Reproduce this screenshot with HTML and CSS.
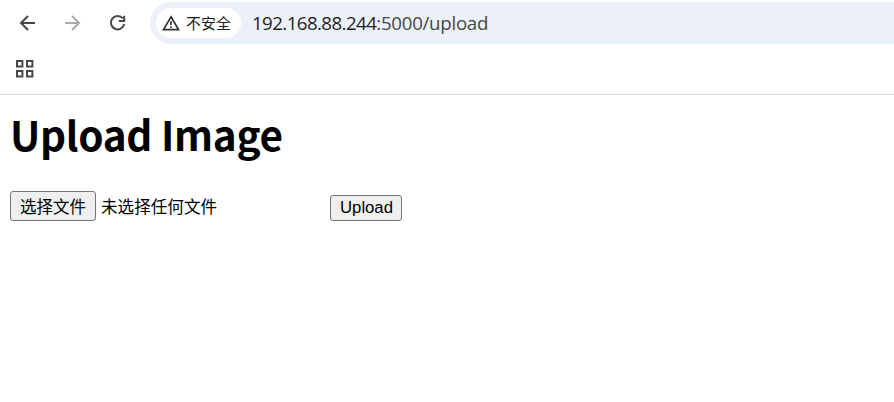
FILE: index.html
```html
<!DOCTYPE html>
<html lang="zh-CN">
<head>
<meta charset="utf-8">
<title>Upload Image</title>
<link rel="stylesheet" href="styles.css">
</head>
<body>
<header class="browser">
  <nav class="toolbar">
    <svg class="icon" viewBox="0 0 20 20"><path d="M18 10H4.5M11 3L4 10L11 17"/></svg>
    <svg class="icon icon-disabled" viewBox="0 0 20 20"><path d="M3 10H16.5M10 3L17 10L10 17"/></svg>
    <svg class="icon" viewBox="0 0 20 20"><path d="M15.8 5.4A6.7 6.7 0 1 0 17.2 11M17.2 2.8V8.1H11.9"/></svg>
    <div class="address">
      <div class="security">
        <svg class="warning" viewBox="0 0 18 16"><path d="M9 1.8L16.6 14.7H1.4Z"/><path d="M9 6.2V10M9 11.2V12.9"/></svg>
        <span class="security-text">不安全</span>
      </div>
      <div class="url"><span class="host">192.168.88.244</span>:5000/upload</div>
    </div>
  </nav>
  <div class="bookmarks">
    <svg class="apps" viewBox="0 0 20 20"><path d="M2 2H7.4V7.4H2ZM12 2H17.4V7.4H12ZM2 12H7.4V17.4H2ZM12 12H17.4V17.4H12Z"/></svg>
  </div>
</header>
<main class="page">
  <h1 class="title">Upload Image</h1>
  <form class="form">
    <button class="button choose" type="button">选择文件</button>
    <span class="status">未选择任何文件</span>
    <button class="button submit" type="button">Upload</button>
  </form>
</main>
</body>
</html>
```
FILE: styles.css
```css
* {
  box-sizing: border-box;
}

body {
  margin: 0;
  background: #fff;
  color: #000;
  font-family: "Noto Sans CJK SC", sans-serif;
}

.browser {
  height: 95px;
  border-bottom: 1px solid #dedfe0;
}

.toolbar {
  display: flex;
  align-items: center;
  height: 44px;
  padding: 2px 0 0 17px;
}

.icon {
  flex: none;
  width: 20px;
  height: 20px;
  margin-right: 25px;
  fill: none;
  stroke: #474747;
  stroke-width: 2;
}

.icon:nth-of-type(3) {
  margin-right: 23px;
}

.icon-disabled {
  stroke: #ababab;
}

.address {
  display: flex;
  flex: 1;
  align-items: center;
  height: 42px;
  padding-left: 6px;
  border-radius: 21px 0 0 21px;
  background: #ebf0f9;
}

.security {
  display: flex;
  align-items: center;
  width: 85px;
  height: 30px;
  padding-left: 6px;
  border-radius: 15px;
  background: #fff;
}

.warning {
  width: 18px;
  height: 16px;
  margin-right: 6px;
  fill: none;
  stroke: #303236;
  stroke-width: 1.7;
}

.security-text {
  color: #1f1f1f;
  font-size: 15px;
  font-weight: 400;
  line-height: 32px;
  white-space: nowrap;
}

.url {
  margin-left: 11px;
  color: #474747;
  font-family: "Open Sans", sans-serif;
  font-size: 18.7px;
  letter-spacing: -0.28px;
  line-height: 42px;
  white-space: nowrap;
}

.host {
  color: #1f1f1f;
  letter-spacing: -0.57px;
}

.bookmarks {
  display: flex;
  align-items: center;
  height: 50px;
  padding-left: 15px;
}

.apps {
  width: 20px;
  height: 20px;
  fill: none;
  stroke: #474747;
  stroke-width: 2;
}

.page {
  padding: 8px 10px;
}

.title {
  margin: 0;
  font-size: 40.5px;
  font-weight: 700;
  letter-spacing: -0.3px;
  line-height: 62px;
}

.form {
  display: flex;
  align-items: center;
  height: 30px;
  margin-top: 26px;
}

.button {
  padding: 0;
  border: 1px solid #767676;
  border-radius: 3px;
  background: #efefef;
  color: #000;
  text-align: center;
}

.choose {
  width: 86px;
  height: 30px;
  font: 16.5px/28px "Noto Sans CJK SC", sans-serif;
}

.status {
  width: 229px;
  margin-left: 5px;
  font-size: 16.6px;
  line-height: 30px;
}

.submit {
  width: 72px;
  height: 26px;
  margin-top: 4px;
  padding-left: 1px;
  font: 16.7px/24px "Liberation Sans", sans-serif;
}
```
